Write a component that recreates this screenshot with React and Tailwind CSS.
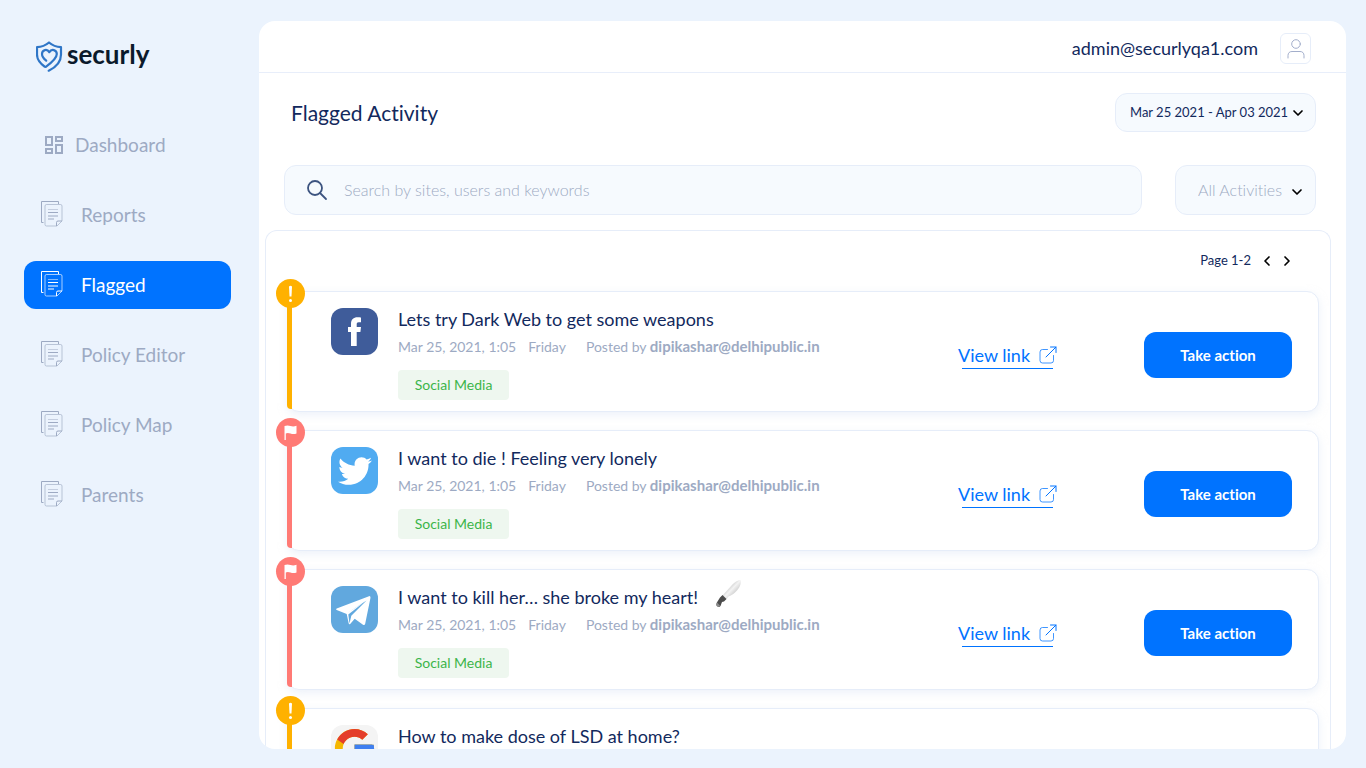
import { useState } from "react";
import { FaTwitter } from "react-icons/fa";

const navItems = [
  { name: "Dashboard", icon: "grid" },
  { name: "Reports", icon: "doc" },
  { name: "Flagged", icon: "doc" },
  { name: "Policy Editor", icon: "doc" },
  { name: "Policy Map", icon: "doc" },
  { name: "Parents", icon: "doc" },
];

const activities = [
  { id: 1, site: "facebook", level: "warning", title: "Lets try Dark Web to get some weapons" },
  { id: 2, site: "twitter", level: "flag", title: "I want to die ! Feeling very lonely" },
  { id: 3, site: "telegram", level: "flag", title: "I want to kill her… she broke my heart!", knife: true },
  { id: 4, site: "google", level: "warning", title: "How to make dose of LSD at home?" },
];

function Logo() {
  return (
    <a href="#" className="flex items-center gap-1 pl-9 text-[#0b1a2b]">
      <svg width="27" height="31" viewBox="0 0 27 31" fill="none" stroke="#2f76c7" strokeWidth="2.200" strokeLinecap="round" strokeLinejoin="round">
        <path d="M8.5 25.5C3.5 22 1 18.500 1 13.500V6.200C5.500 6 9.500 4.500 13 1.500c3.500 3 7.500 4.500 12 4.700v7.300c0 7-4.500 12.500-12.300 16.200" />
        <path d="M10.200 19.700C7.500 17.500 6 15.500 6 13c0-4.300 5.200-5.500 7.300-1.800C15.400 7.500 20.800 8.700 20.800 13c0 4.500-5.300 8.700-11 12.800" />
      </svg>
      <span className="pb-1 text-[26px] leading-7 font-bold">securly</span>
    </a>
  );
}

function GridIcon() {
  return (
    <svg width="20" height="20" viewBox="0 0 20 20" fill="none" stroke="currentColor" strokeWidth="2" className="ml-1 mr-[11px]">
      <path d="M2 2h6v8H2zM12 2h6v4h-6zM2 14h6v4H2zM12 10h6v8h-6z" />
    </svg>
  );
}

function DocIcon() {
  return (
    <svg width="24" height="28" viewBox="0 0 24 28" fill="none" stroke="currentColor" className="mb-0.5 mr-[17px]">
      <path d="M3.500 22.500h-2v-21h17v2.500" />
      <path d="M6.500 4.500h14q1.500 0 1.500 1.500v15l-5 5H6.500Q5 26 5 24.500V6Q5 4.500 6.500 4.500z" opacity=".65" />
      <path d="M16.500 26v-3.500q0-1.500 1.500-1.500h4" />
      <path d="M8 9.500h10" opacity=".5" />
      <path d="M8 12.500h10M8 16h10M8 19h6" />
    </svg>
  );
}

function Chevron({ className }) {
  return (
    <svg width="12" height="12" viewBox="0 0 12 12" fill="none" stroke="currentColor" strokeWidth="1.700" strokeLinecap="round" strokeLinejoin="round" className={className}>
      <path d="M2 4l4 4 4-4" />
    </svg>
  );
}

function UserIcon() {
  return (
    <svg width="20" height="22" viewBox="0 0 20 22" fill="none" stroke="#a3aecb" strokeLinecap="round">
      <circle cx="10" cy="6" r="4.300" />
      <path d="M2 20v-2.500c0-2.500 1.500-4 4-4h8c2.500 0 4 1.500 4 4V20" />
    </svg>
  );
}

function SearchIcon() {
  return (
    <svg width="22" height="22" viewBox="0 0 22 22" fill="none" stroke="#3d5480" strokeWidth="1.800" strokeLinecap="round" className="shrink-0">
      <circle cx="9" cy="9" r="7" />
      <path d="M14 14l6 6" />
    </svg>
  );
}

function ExternalIcon() {
  return (
    <svg width="18" height="18" viewBox="0 0 18 18" fill="none" stroke="currentColor" strokeLinecap="round" strokeLinejoin="round">
      <path d="M8.500 3.500H3.500Q1 3.500 1 6v8.500Q1 17 3.500 17H12q2.500 0 2.500-2.500V9.500" opacity=".75" />
      <path d="M7 11L17 1M11.500 1H17v5.500" />
    </svg>
  );
}

function KnifeIcon() {
  return (
    <svg width="28" height="28" viewBox="0 0 28 28" className="ml-4">
      <defs>
        <linearGradient id="blade" x1="0" y1="0" x2="1" y2="1">
          <stop offset="0.300" stopColor="#c4c4c4" />
          <stop offset="0.500" stopColor="#f3f3f3" />
          <stop offset="0.800" stopColor="#bdbdbd" />
        </linearGradient>
      </defs>
      <path d="M8.500 16.500L18 6q4-4.500 8.500-5c1 4-1 8-4.500 11.500-3 3-5 4-7.500 5l-2 2.500z" fill="url(#blade)" />
      <path d="M8.500 16l4 4-2.500 2.500-2 .5-1.500 4q-2 2-4-.5-.5-2 1-4l2.500-4z" fill="#4c4c4c" />
      <path d="M3 23.500l3 3-1.500 1.500q-2-.5-2.300-2.500z" fill="#8b8b8b" />
    </svg>
  );
}

function SiteIcon({ site }) {
  if (site === "twitter") {
    return (
      <div className="flex size-[47px] shrink-0 items-center justify-center rounded-xl bg-[#50abf1]">
        <FaTwitter size={34} color="#fff" />
      </div>
    );
  }

  if (site === "google") {
    return (
      <div className="size-[47px] shrink-0 rounded-xl bg-[#f4f4f4]">
        <svg width="47" height="47" viewBox="0 0 48 48">
          <path fill="#f5b700" d="M43.611,20.083H42V20H24v8h11.303c-1.649,4.657-6.08,8-11.303,8c-6.627,0-12-5.373-12-12c0-6.627,5.373-12,12-12c3.059,0,5.842,1.154,7.961,3.039l5.657-5.657C34.046,6.053,29.268,4,24,4C12.955,4,4,12.955,4,24c0,11.045,8.955,20,20,20c11.045,0,20-8.955,20-20C44,22.659,43.862,21.35,43.611,20.083z" />
          <path fill="#e43e2b" d="M6.306,14.691l6.571,4.819C14.655,15.108,18.961,12,24,12c3.059,0,5.842,1.154,7.961,3.039l5.657-5.657C34.046,6.053,29.268,4,24,4C16.318,4,9.656,8.337,6.306,14.691z" />
          <path fill="#34a353" d="M24,44c5.166,0,9.86-1.977,13.409-5.192l-6.19-5.238C29.211,35.091,26.715,36,24,36c-5.202,0-9.619-3.317-11.283-7.946l-6.522,5.025C9.505,39.556,16.227,44,24,44z" />
          <path fill="#3f7ff0" d="M43.611,20.083H42V20H24v8h11.303c-0.792,2.237-2.231,4.166-4.087,5.571l6.19,5.238C36.971,39.205,44,34,44,24C44,22.659,43.862,21.35,43.611,20.083z" />
        </svg>
      </div>
    );
  }

  if (site === "telegram") {
    return (
      <div className="size-[47px] shrink-0 rounded-xl bg-[#61a8de]">
        <svg width="47" height="47" viewBox="0 0 47 47">
          <path fill="#fff" d="M38 10.200L5.700 22.500q-1.400.8 0 1.500l10 4 2 9.500q.7 1.300 1.700.2l4.300-5 8.300 6q1.700.9 2.200-1L39.500 11.700q0-2-1.500-1.500z" />
          <path fill="#61a8de" d="M15.500 27.600L35.500 14.500 20.300 29.800 18.500 37.500 17.300 28.500 32 17z" />
        </svg>
      </div>
    );
  }

  return (
    <div className="size-[47px] shrink-0 rounded-xl bg-[#3f5c9a]">
      <svg width="47" height="47" viewBox="0 0 47 47" fill="#fff">
        <path d="M20 38V24h-3v-5h3v-3c0-4.500 2.500-6.700 6.500-6.700 1.500 0 2.800.1 3.500.2v4.800h-2.300c-1.600 0-2 .8-2 2V19H30l-.6 5h-3.700v14z" />
      </svg>
    </div>
  );
}

function LevelMarker({ level }) {
  const isWarning = level === "warning";

  return (
    <>
      <span className={`absolute -left-px top-0 bottom-0.5 w-[5px] rounded-bl ${isWarning ? "bg-[#ffb100]" : "bg-[#ff7a75]"}`} />
      <span
        className={`absolute -left-3 -top-[13px] flex size-[29px] items-center justify-center rounded-full ${
          isWarning ? "bg-[#ffb100]" : "bg-[#ff7a75]"
        }`}
      >
        {isWarning ? (
          <svg width="5" height="18" viewBox="0 0 5 18" fill="#fff">
            <path d="M1 1.500q1.500-1.500 3 0l-.5 10h-2z" />
            <circle cx="2.500" cy="15.500" r="1.500" />
          </svg>
        ) : (
          <svg width="13" height="15" viewBox="0 0 13 15" fill="#fff">
            <path d="M.5 1q3-1 6 0t6-.3v7.800q-3 1-6 0t-4.700 0V15H.5z" />
          </svg>
        )}
      </span>
    </>
  );
}

function ActivityCard({ activity }) {
  return (
    <li className="relative flex gap-5 rounded-xl border border-[#e6edf9] bg-white pl-[43px] pr-[26px] pt-4 pb-[9px] shadow-[0_3px_8px_rgba(220,230,245,0.5)]">
      <LevelMarker level={activity.level} />
      <SiteIcon site={activity.site} />

      <div className="min-w-0 flex-1 pb-0.5">
        <div className="flex h-[22px] items-center">
          <h2 className="text-[18px] leading-[22px] text-[#12295d]">{activity.title}</h2>
          {activity.knife && (
            <span className="-mt-2">
              <KnifeIcon />
            </span>
          )}
        </div>
        <div className="mt-1.5 flex text-[14px] leading-[22px] text-[#9daac3]">
          <p className="mr-3">Mar 25, 2021, 1:05</p>
          <p className="mr-5">Friday</p>
          <p>
            Posted by <b className="text-[15px] leading-4">dipikashar@delhipublic.in</b>
          </p>
        </div>
        <p className="mt-3 w-[111px] rounded bg-[#eef7ef] text-center text-[14px] leading-[30px] text-[#3cb54a]">
          Social Media
        </p>
      </div>

      <a
        href="#"
        className="relative mr-[67px] flex h-7 w-[99px] items-center justify-between self-center text-[18px] text-[#0073ff] after:absolute after:inset-x-1 after:bottom-0 after:h-px after:bg-[#0073ff]"
      >
        View link
        <ExternalIcon />
      </a>
      <button type="button" className="h-[46px] w-[148px] self-center rounded-xl bg-[#0073ff] text-[15px] font-bold text-white">
        Take action
      </button>
    </li>
  );
}

export default function App() {
  const [activeItem, setActiveItem] = useState("Flagged");
  const [search, setSearch] = useState("");

  return (
    <div className="flex h-screen overflow-hidden bg-[#ebf3fd] font-['Lato',sans-serif] [font-variant-ligatures:none]">
      <aside className="w-[259px] shrink-0 pt-10">
        <Logo />
        <nav className="mt-[49px] flex flex-col gap-[22px] pl-6 pr-7">
          {navItems.map((item) => {
            const isActive = activeItem === item.name;

            return (
              <a
                key={item.name}
                href="#"
                onClick={() => setActiveItem(item.name)}
                className={`flex h-12 items-center rounded-xl px-4 text-[19px] ${
                  isActive ? "bg-[#0073ff] text-white" : "text-[#9daac3]"
                }`}
              >
                {item.icon === "grid" ? <GridIcon /> : <DocIcon />}
                {item.name}
              </a>
            );
          })}
        </nav>
      </aside>

      <main className="mt-[21px] mr-5 mb-[19px] flex min-w-0 flex-1 flex-col overflow-hidden rounded-2xl bg-white">
        <header className="flex h-[52px] shrink-0 items-center justify-end gap-[22px] border-b border-[#e8eefa] pr-[35px] pt-1">
          <span className="text-[18px] text-[#12295d]">admin@securlyqa1.com</span>
          <button type="button" aria-label="Account" className="flex size-[31px] items-center justify-center rounded-md border border-[#e6edf9]">
            <UserIcon />
          </button>
        </header>

        <div className="mt-5 flex shrink-0 items-center justify-between pl-8 pr-[30px]">
          <h1 className="text-[21px] text-[#12295d]">Flagged Activity</h1>
          <button
            type="button"
            className="flex h-[39px] w-[201px] items-center justify-between rounded-xl border border-[#e6edf9] bg-[#f6fafe] pl-3.5 pr-[11px] text-[13px] whitespace-nowrap text-[#12295d]"
          >
            Mar 25 2021 - Apr 03 2021
            <Chevron className="text-black" />
          </button>
        </div>

        <div className="mt-[33px] flex shrink-0 gap-[33px] pl-[25px] pr-[30px]">
          <label className="flex h-[50px] flex-1 items-center gap-4 rounded-xl border border-[#e6edf9] bg-[#f6fafe] px-[21px]">
            <SearchIcon />
            <input
              type="text"
              aria-label="Search"
              placeholder="Search by sites, users and keywords"
              value={search}
              onChange={(e) => setSearch(e.target.value)}
              className="w-full bg-transparent text-[16px] font-light text-[#12295d] outline-none placeholder:text-[#9daac3]"
            />
          </label>
          <div className="relative">
            <select
              aria-label="Activity type"
              className="h-[50px] w-[141px] appearance-none rounded-xl border border-[#e6edf9] bg-[#f6fafe] pl-[22px] text-[16px] font-light text-[#9daac3]"
            >
              <option>All Activities</option>
            </select>
            <Chevron className="pointer-events-none absolute right-[13px] top-[21px] text-black" />
          </div>
        </div>

        <section className="mt-[15px] ml-1.5 mr-[15px] min-h-0 flex-1 overflow-y-auto rounded-t-xl border border-b-0 border-[#e6edf9] [scrollbar-width:none]">
          <div className="flex h-[60px] items-center justify-end pr-[37px] text-[13px] text-[#12295d]">
            <span className="mr-2.5">Page 1-2</span>
            <button type="button" aria-label="Previous page" className="mr-2">
              <Chevron className="rotate-90 text-black" />
            </button>
            <button type="button" aria-label="Next page">
              <Chevron className="-rotate-90 text-black" />
            </button>
          </div>

          <ul className="flex flex-col gap-[18px] pl-[21px] pr-[11px]">
            {activities.map((activity) => (
              <ActivityCard key={activity.id} activity={activity} />
            ))}
          </ul>
        </section>
      </main>
    </div>
  );
}
